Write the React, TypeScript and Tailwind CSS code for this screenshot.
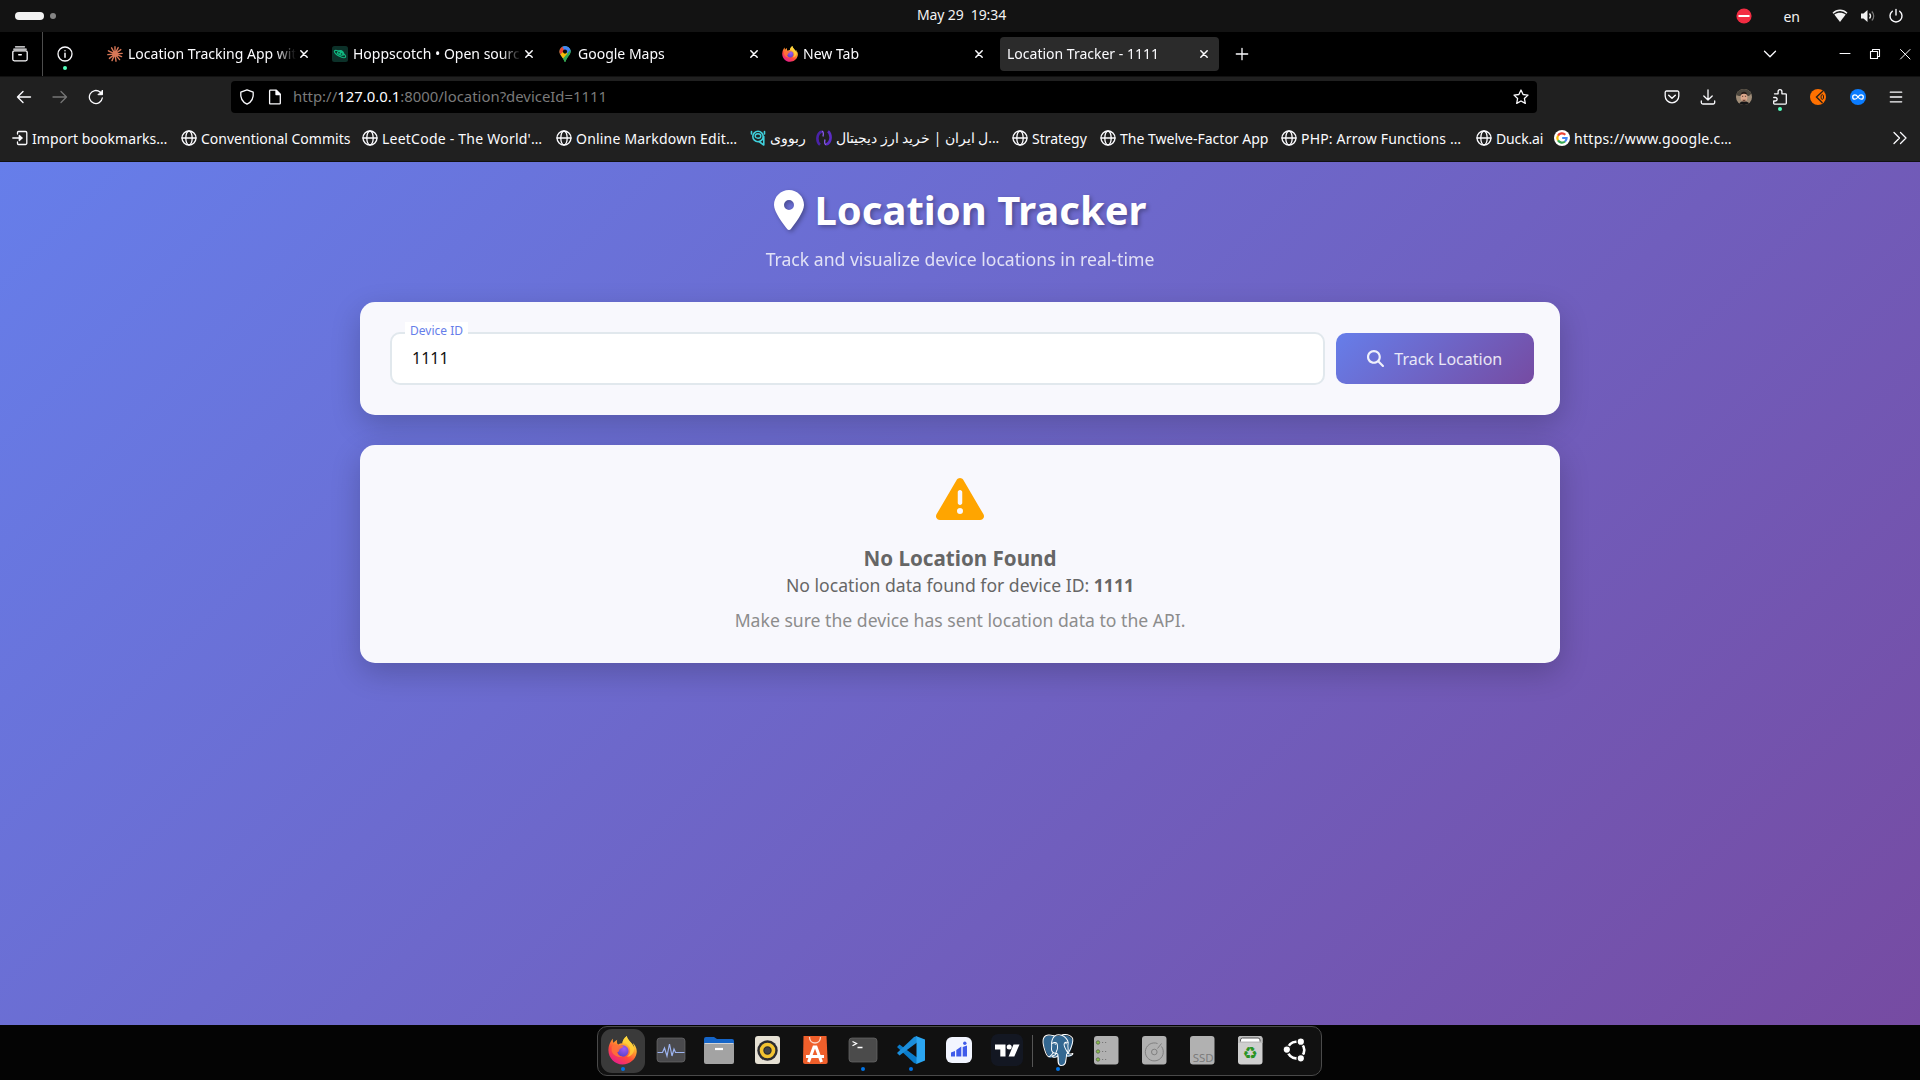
import React from "react";
import { FaLocationDot, FaTriangleExclamation, FaMagnifyingGlass } from "react-icons/fa6";
import { SiPostgresql } from "react-icons/si";

type P = { children?: React.ReactNode; className?: string };

/* 16px line icon */
function Ico({ children, className = "size-4 text-[#fbfbfe]" }: P) {
  return (
    <svg viewBox="0 0 16 16" fill="none" stroke="currentColor" strokeWidth="1.3" strokeLinecap="round" strokeLinejoin="round" className={"shrink-0 " + className}>
      {children}
    </svg>
  );
}

function Globe() {
  return (
    <Ico>
      <circle cx="8" cy="8" r="7" />
      <ellipse cx="8" cy="8" rx="3.2" ry="7" />
      <path d="M1 8h14" />
    </Ico>
  );
}

function Firefox({ className, id }: { className: string; id: string }) {
  return (
    <svg viewBox="0 0 32 32" className={"shrink-0 " + className}>
      <defs>
        <linearGradient id={id + "a"} x1="0.8" y1="0.05" x2="0.25" y2="0.95">
          <stop offset="0" stopColor="#fff44f" />
          <stop offset="0.35" stopColor="#ffa02c" />
          <stop offset="0.65" stopColor="#ff4b3a" />
          <stop offset="1" stopColor="#e81e8c" />
        </linearGradient>
        <radialGradient id={id + "b"} cx="0.6" cy="0.3" r="0.8">
          <stop offset="0" stopColor="#a05cf2" />
          <stop offset="1" stopColor="#4f3fc4" />
        </radialGradient>
      </defs>
      <path
        d="M30.6 12.2c-.7-1.700-2.100-3.500-3.200-4.100.9 1.800 1.400 3.500 1.600 4.900-1.700-4.300-4.700-6-7.100-9.900C21.200 2 20.900 1.200 20.800 0c-3 1.700-4.600 4.900-5 8.100-1.700.1-3.200.5-4.600 1.200C9.700 8 9.500 5.600 10.200 4 8.400 4.800 7 6.200 6 7.400c-.7-.9-.7-3.700-.6-4.300-.8.3-4.500 5.200-4.900 11.500C-.2 23.500 7 31.500 16 31.500c8 0 14.600-5.700 15.600-13 .3-2.100 0-4.300-1-6.300z"
        fill={`url(#${id}a)`}
      />
      <circle cx="16.400" cy="16.600" r="6.300" fill={`url(#${id}b)`} />
      <path d="M4 12c2-3 5-3.500 8-1.500 2 .2 4.500 0 5 .9-.4 1.800-3.600 2.100-4.400 3.600-.6 1.700.1 2.500-2.500 3 .5 3 3.400 5 6.500 4.600-5 2-11-1-12.600-6z" fill="#ff7139" opacity="0.9" />
      <path d="M20.800 0c-3.500 2-4.800 6-5 8.100 5-.3 8.700 3.500 8.700 8 0 3-1.500 5.500-3.500 6.900 5-.5 8-5 8-9.500C28 8 22 6 20.800 0z" fill="#ffd43a" opacity="0.75" />
    </svg>
  );
}

function Claude() {
  return (
    <svg viewBox="0 0 16 16" className="size-4 shrink-0" stroke="#d97757" strokeWidth="1.400" strokeLinecap="round">
      <path d="M8 8V.8M8 8l3.200-6.400M8 8l5.800-4.400M8 8l7.200-.6M8 8l6.600 2.600M8 8l4.600 5.600M8 8l1 7.200M8 8l-3 6.600M8 8l-5.600 4.400M8 8L.8 8.600M8 8L1.400 4.800M8 8L4.600 1.800" />
    </svg>
  );
}

function Hoppscotch() {
  return (
    <svg viewBox="0 0 16 16" className="size-4 shrink-0">
      <rect width="16" height="16" rx="2.500" fill="#0c3129" />
      <ellipse cx="8" cy="8" rx="6.300" ry="2.300" transform="rotate(28 8 8)" fill="none" stroke="#10b981" strokeWidth="1.200" />
      <path d="M4.600 7.200c.5-2.600 3-4 5.200-3 2.200.9 2.800 3.400 1.800 5.600-2.700.2-5.600-.8-7-2.600z" fill="#10b981" />
      <circle cx="7" cy="6.800" r=".8" fill="#0c3129" />
      <circle cx="9.600" cy="8" r=".8" fill="#0c3129" />
    </svg>
  );
}

function MapsPin() {
  return (
    <svg viewBox="0 0 12 16" className="h-4 w-3 shrink-0">
      <clipPath id="pin">
        <path d="M6 0a5.600 5.600 0 0 1 5.600 5.600c0 3.600-3.800 5.400-4.800 9.700-.2.900-1.400.9-1.600 0C4.200 11 .4 9.200.4 5.600A5.600 5.600 0 0 1 6 0z" />
      </clipPath>
      <g clipPath="url(#pin)">
        <rect width="12" height="16" fill="#34a853" />
        <path d="M0 10L12-2v8L4 12z" fill="#4285f4" />
        <path d="M2 0h10v5L6 5.500z" fill="#4285f4" />
        <path d="M0 0h3l3 5.600L0 9z" fill="#ea4335" />
        <path d="M0 9.800L6 4l2.500 4L3.500 13z" fill="#fbbc04" />
        <path d="M8 8l4-5v6l-6 7-2.300-3z" fill="#34a853" />
      </g>
      <circle cx="6" cy="5.600" r="2.100" fill="#0b0b0b" />
    </svg>
  );
}

function Close() {
  return (
    <Ico className="size-4 text-[#fbfbfe]">
      <path d="M4.800 4.800l6.400 6.400M11.200 4.800l-6.400 6.400" strokeWidth="1.500" />
    </Ico>
  );
}

function Tab({ icon, title, active = false }: { icon?: React.ReactNode; title: string; active?: boolean }) {
  return (
    <div className={"mr-1.5 flex h-[34px] w-[219px] items-center rounded-[4px] pr-[7px] pl-[7px] " + (active ? "bg-[#2b2b2b]" : "")}>
      {icon && <div className="mr-[5px] flex w-4 justify-center">{icon}</div>}
      <span className="-mt-0.5 min-w-0 flex-1 overflow-hidden whitespace-nowrap [mask-image:linear-gradient(to_right,black_calc(100%_-_20px),transparent)]">{title}</span>
      <Close />
    </div>
  );
}

function Mark({ icon, children, className }: P & { icon: React.ReactNode }) {
  return (
    <div className={"flex shrink-0 items-center gap-1 whitespace-nowrap " + className}>
      {icon}
      <span>{children}</span>
    </div>
  );
}

function DockItem({ children, active = false, dot = false, className = "w-12" }: P & { active?: boolean; dot?: boolean }) {
  return (
    <div className={"relative flex h-full items-center justify-center " + className}>
      <div className={"flex size-11 items-center justify-center rounded-[11px] pb-0.5 " + (active ? "bg-[#3a3a3a]" : "")}>{children}</div>
      {dot && <span className="absolute bottom-1 left-1/2 size-1 -translate-x-1/2 rounded-full bg-[#0073e5]" />}
    </div>
  );
}

function Svg({ children, className = "size-8" }: P) {
  return (
    <svg viewBox="0 0 32 32" className={"shrink-0 " + className}>
      {children}
    </svg>
  );
}

function SystemBar() {
  return (
    <header className="grid h-8 shrink-0 grid-cols-3 items-center bg-[#131313] text-[#f2f2f2]">
      <div className="flex items-center gap-1.5 pl-[15px]">
        <span className="h-2 w-[29px] rounded-full bg-[#f2f2f2]" />
        <span className="size-1.5 rounded-full bg-[#858585]" />
      </div>
      <div className="-mt-1 pl-[3px] text-center tracking-[-0.1px] whitespace-pre">May 29  19:34</div>
      <div className="flex items-center justify-end pr-4">
        <svg viewBox="0 0 16 16" className="mr-[31px] size-4">
          <circle cx="8" cy="8" r="7.600" fill="#f22c42" />
          <rect x="2.500" y="7" width="11" height="2" fill="#fff" />
        </svg>
        <span className="mr-8">en</span>
        <svg viewBox="0 0 16 16" className="mr-3 size-4" fill="none" stroke="#f2f2f2">
          <path d="M1 5.300C5 1.300 11 1.300 15 5.300" strokeWidth="1.400" />
          <path d="M2.300 6.500C5.500 4 10.500 4 13.700 6.500L8 14z" fill="#f2f2f2" stroke="none" />
        </svg>
        <svg viewBox="0 0 16 16" className="mr-3 size-4" fill="none" stroke="#f2f2f2">
          <path d="M1 5.500h2.500L7.500 2v12l-4-3.500H1z" fill="#f2f2f2" stroke="none" />
          <path d="M9.500 5.500c1.300 1.500 1.300 3.500 0 5" strokeWidth="1.300" />
          <path d="M11.800 3.500c2.600 2.600 2.600 6.400 0 9" strokeWidth="1.200" opacity="0.45" />
        </svg>
        <Ico>
          <path d="M8 1.500V7M4.300 3.300a6 6 0 1 0 7.400 0" strokeWidth="1.400" />
        </Ico>
      </div>
    </header>
  );
}

function TabBar() {
  return (
    <div className="flex h-11 shrink-0 items-center bg-black">
      <div className="flex h-full w-[43px] items-center border-r border-[#4d4d4d] pl-3">
        <Ico>
          <path d="M3.500.8h9M1.800 3.200h12.400" />
          <rect x=".8" y="4.800" width="14.400" height="10" rx="1.500" />
          <path d="M6.800 8.800h2.400" strokeWidth="1.600" />
        </Ico>
      </div>
      <div className="relative mr-[27px] ml-[14px] flex">
        <Ico>
          <circle cx="8" cy="8" r="7" />
          <path d="M8 7.300v4M8 4.700v.1" strokeWidth="1.500" />
        </Ico>
        <span className="absolute top-5 left-1.5 size-1 rounded-full bg-[#54ffbd]" />
      </div>
      <div className="flex">
        <Tab icon={<Claude />} title="Location Tracking App with" />
        <Tab icon={<Hoppscotch />} title="Hoppscotch • Open source API" />
        <Tab icon={<MapsPin />} title="Google Maps" />
        <Tab icon={<Firefox id="t" className="size-4" />} title="New Tab" />
        <Tab title="Location Tracker - 1111" active />
      </div>
      <Ico className="ml-[9px] size-4 text-[#fbfbfe]">
        <path d="M8 2.300v11.400M2.300 8h11.400" />
      </Ico>
      <div className="flex-1" />
      <Ico className="mr-[59px] size-4 text-[#fbfbfe]">
        <path d="M2.500 5.200L8 10.700l5.500-5.500" />
      </Ico>
      <Ico className="mr-[14px] size-4 text-[#fbfbfe]">
        <path d="M3 7.500h10" strokeWidth="1" />
      </Ico>
      <Ico className="mr-[14px] size-4 text-[#fbfbfe]">
        <path d="M3.500 5.500h7v7h-7zM5.500 5.500v-2h7v7h-2" strokeWidth="1.100" />
      </Ico>
      <Ico className="mr-[7px] size-4 text-[#fbfbfe]">
        <path d="M3.500 3.500l9.500 9.500M13 3.500l-9.500 9.500" strokeWidth="1" />
      </Ico>
    </div>
  );
}

function Toolbar() {
  return (
    <div className="flex h-11 shrink-0 items-center border-t border-[#111] bg-[#202020] pb-[3px]">
      <Ico className="ml-4 size-4 text-[#fbfbfe]">
        <path d="M14.500 8H1.500M7 2.500L1.500 8 7 13.500" strokeWidth="1.400" />
      </Ico>
      <Ico className="ml-5 size-4 text-[#757575]">
        <path d="M1 8h13.500M9 2.500L14.500 8 9 13.500" />
      </Ico>
      <Ico className="ml-5 size-4 text-[#fbfbfe]">
        <path d="M14.300 9a6.500 6.500 0 1 1-2.200-5.900L14 4.900" />
        <path d="M14.500 1.500v4.200h-4.200z" fill="currentColor" strokeWidth="1" />
      </Ico>
      <div className="ml-[127px] flex h-8 w-[1306px] items-center rounded-[4px] bg-black pr-2 pl-2">
        <Ico className="size-4 text-[#fbfbfe]">
          <path d="M8 .8l6.200 2.400c.6 5.200-1.400 9.600-6.200 12C3.200 12.800 1.200 8.400 1.800 3.200z" />
        </Ico>
        <Ico className="ml-3 size-4 text-[#fbfbfe]">
          <path d="M3.300 1.200h6l4 4v9a.7.7 0 0 1-.7.700H3.300a.7.7 0 0 1-.7-.7V1.900a.7.7 0 0 1 .7-.7z" />
          <path d="M9 1.500v4h4z" fill="currentColor" />
        </Ico>
        <span className="-mt-px ml-[10px] text-[14.9px] text-[#7a7a7a]">
          http://<span className="text-[#fbfbfe]">127.0.0.1</span>:8000/location?deviceId=1111
        </span>
        <div className="flex-1" />
        <Ico className="size-4 text-[#fbfbfe]">
          <path d="M8 1l2.100 4.500 4.900.6-3.600 3.400.9 4.900L8 12l-4.300 2.400.9-4.900L1 6.100l4.900-.6z" />
        </Ico>
      </div>
      <div className="flex-1" />
      <Ico className="mr-5 size-4 text-[#fbfbfe]">
        <path d="M2.500 2h11a1.300 1.300 0 0 1 1.300 1.300V7A6.800 6.800 0 0 1 1.200 7V3.300A1.300 1.300 0 0 1 2.500 2z" />
        <path d="M4.700 6.200L8 9.200l3.300-3" strokeWidth="1.500" />
      </Ico>
      <Ico className="mr-5 size-4 text-[#fbfbfe]">
        <path d="M8 .8v10M3.800 7L8 11l4.200-4M1.300 12v1.500a1.500 1.500 0 0 0 1.500 1.500h10.400a1.500 1.500 0 0 0 1.500-1.500V12" />
      </Ico>
      <svg viewBox="0 0 16 16" className="mr-5 size-4">
        <clipPath id="av">
          <circle cx="8" cy="8" r="8" />
        </clipPath>
        <g clipPath="url(#av)">
          <rect width="16" height="16" fill="#a08d78" />
          <path d="M0 0h16v4l-3 3H3L0 6z" fill="#4a453c" />
          <path d="M3 16c0-5 10-5 11 0z" fill="#151517" />
          <ellipse cx="8" cy="8" rx="3.400" ry="4.500" fill="#dba68a" />
          <path d="M4.500 6C5 1.500 11 1.500 11.500 6 9 4.200 7 4.200 4.500 6z" fill="#241c18" />
          <path d="M6.300 10.800h3.500l-.8 1.500H7z" fill="#6b4536" />
          <path d="M6 7.300h1.200M8.900 7.300h1.200" stroke="#3a2620" strokeWidth=".8" />
        </g>
      </svg>
      <div className="relative mr-[22px]">
        <Ico>
          <path d="M2.500 4.800h3.600V2.600a1.900 1.900 0 0 1 3.800 0v2.200h3.600a.8.8 0 0 1 .8.800v8.700a.8.800 0 0 1-.8.800H2.500a.8.8 0 0 1-.8-.8V12h1.700a1.700 1.700 0 0 0 0-3.500H1.700" />
        </Ico>
        <span className="absolute top-[18px] left-1.5 size-1 rounded-full bg-[#54ffbd]" />
      </div>
      <svg viewBox="0 0 16 16" className="mr-6 size-4">
        <circle cx="8" cy="8" r="8" fill="#ff7000" />
        <path d="M13 2L6.500 8l6 6" fill="none" stroke="#2a2018" strokeWidth="1.400" />
        <ellipse cx="12.300" cy="8" rx="1.300" ry="2.400" fill="none" stroke="#2a2018" strokeWidth="1" />
      </svg>
      <svg viewBox="0 0 16 16" className="mr-[22px] size-4">
        <circle cx="8" cy="8" r="8" fill="#0a7cff" />
        <path d="M8 8c-1-1.500-2-2.200-3.100-2.200a2.200 2.200 0 0 0 0 4.400C6 10.200 7 9.500 8 8s2-2.200 3.100-2.200a2.200 2.200 0 0 1 0 4.400C10 10.200 9 9.500 8 8z" fill="none" stroke="#fff" strokeWidth="1.300" />
      </svg>
      <Ico className="mr-4 size-4 text-[#fbfbfe]">
        <path d="M2.300 3.200h11.400M2.300 8h11.400M2.300 12.800h11.400" />
      </Ico>
    </div>
  );
}

function Bookmarks() {
  return (
    <div className="flex h-[42px] shrink-0 items-center border-b border-[#111] bg-[#202020] pb-[5px] pl-3 text-[#fbfbfe]">
      <Mark
        className="w-[169px] tracking-[0.06px]"
        icon={
          <Ico>
            <path d="M5.500 4V2.500A1 1 0 0 1 6.500 1.500h7A1.300 1.300 0 0 1 14.800 2.800v10.400a1.300 1.300 0 0 1-1.300 1.300h-7a1 1 0 0 1-1-1V12M.8 8h9" />
            <path d="M7.300 5.400L10 8l-2.700 2.600z" fill="currentColor" />
          </Ico>
        }
      >
        Import bookmarks…
      </Mark>
      <Mark className="w-[181px]" icon={<Globe />}>Conventional Commits</Mark>
      <Mark className="w-[194px] tracking-[0.23px]" icon={<Globe />}>LeetCode - The World'…</Mark>
      <Mark className="w-[194px] tracking-[0.2px]" icon={<Globe />}>Online Markdown Edit…</Mark>
      <Mark
        className="w-[66px] text-[13.5px]"
        icon={
          <Ico className="size-4 text-[#3fd0dc]">
            <path d="M1.500 1.500v2.500M14.500 1.500v2.500" strokeWidth="1.600" />
            <circle cx="8" cy="6.500" r="5.200" strokeWidth="1.600" />
            <ellipse cx="8" cy="6" rx="2.800" ry="2.200" strokeWidth="1.400" />
            <path d="M13.800 6.500V15L9 11.500" strokeWidth="1.600" />
          </Ico>
        }
      >
        ربووی
      </Mark>
      <Mark
        className="w-[196px]"
        icon={
          <svg viewBox="0 0 16 16" className="size-4 shrink-0" fill="none" strokeWidth="2.600">
            <path d="M6 1.500C0 3.500.5 12 4 14.800" stroke="#4a22a8" />
            <path d="M10 14.500C16 12.500 15.500 4 12 1.200" stroke="#5b2cc4" />
            <path d="M6 1.200C8 2.200 7.500 4.500 7 6.500M10 14.800c-2-1-1.500-3.300-1-5.300" stroke="#8d5cf0" strokeWidth="1.300" />
          </svg>
        }
      >
        <span dir="rtl" className="inline-block text-[13.65px]">...ل ایران | خرید ارز دیجیتال</span>
      </Mark>
      <Mark className="w-[88px]" icon={<Globe />}>Strategy</Mark>
      <Mark className="w-[181px]" icon={<Globe />}>The Twelve-Factor App</Mark>
      <Mark className="w-[195px] tracking-[0.18px]" icon={<Globe />}>PHP: Arrow Functions …</Mark>
      <Mark className="w-[78px] tracking-[-0.15px]" icon={<Globe />}>Duck.ai</Mark>
      <Mark
        className="w-[190px] tracking-[0.3px]"
        icon={
          <svg viewBox="0 0 16 16" className="size-4 shrink-0" fill="none" strokeWidth="2.200">
            <circle cx="8" cy="8" r="8" fill="#fff" />
            <path d="M11.300 4.700A4.700 4.700 0 0 0 4 5.600" stroke="#ea4335" />
            <path d="M4 5.600a4.700 4.700 0 0 0 0 4.800" stroke="#fbbc05" />
            <path d="M4 10.400a4.700 4.700 0 0 0 7 1.100" stroke="#34a853" />
            <path d="M11 11.500A4.600 4.600 0 0 0 12.600 8H8.200" stroke="#4285f4" />
          </svg>
        }
      >
        https://www.google.c…
      </Mark>
      <div className="flex-1" />
      <Ico className="mr-3 size-4 text-[#fbfbfe]">
        <path d="M2 2.500L7.500 8 2 13.500M8.500 2.500L14 8l-5.500 5.500" />
      </Ico>
    </div>
  );
}

function Page() {
  return (
    <main className="h-[863px] shrink-0 bg-[linear-gradient(135deg,#667eea_0%,#764ba2_100%)] pt-5 text-[17.6px]">
      <div className="mx-auto w-[1200px]">
        <div className="mb-[31px] flex flex-col items-center text-white">
          <h1 className="mb-2.5 flex h-[55px] items-center gap-[11px] text-[40px] leading-[55px] font-bold [text-shadow:2px_2px_4px_rgba(0,0,0,0.3)]">
            <FaLocationDot className="h-10 w-[30px] drop-shadow-[2px_2px_2px_rgba(0,0,0,0.3)]" />
            Location Tracker
          </h1>
          <p className="h-6 leading-6 opacity-80">Track and visualize device locations in real-time</p>
        </div>
        <section className="flex rounded-[15px] bg-[#f8f8fd] py-[30px] pr-[26.500px] pl-[30px] text-base shadow-[0_10px_30px_rgba(0,0,0,0.2)]">
          <div className="relative h-[53px] w-[935px] rounded-[10px] border-2 border-[#e1e8ed] bg-white px-5 leading-[49px] text-[#111]">
            1111
            <span className="absolute -top-3 left-[13px] h-[17px] bg-white px-[5px] text-xs leading-[17px] text-[#667eea]">Device ID</span>
          </div>
          <button className="mt-px ml-[11px] flex h-[51px] flex-1 items-center justify-center gap-2.5 rounded-[10px] bg-[linear-gradient(135deg,#667eea,#764ba2)] text-white/85">
            <FaMagnifyingGlass className="size-[17px] text-white/90" />
            Track Location
          </button>
        </section>
        <section className="mt-[30px] flex h-[218px] flex-col items-center rounded-[15px] bg-[#f8f8fd] pt-[30px] text-[#666] shadow-[0_10px_30px_rgba(0,0,0,0.2)]">
          <FaTriangleExclamation className="mb-5 size-12 shrink-0 text-[#ffa500]" />
          <h3 className="h-[30px] text-[20.6px] leading-[30px] font-bold">No Location Found</h3>
          <p className="leading-6">
            No location data found for device ID: <b>1111</b>
          </p>
          <p className="mt-[11px] leading-6 text-[#8c8c8c]">Make sure the device has sent location data to the API.</p>
        </section>
      </div>
    </main>
  );
}

function Dock() {
  return (
    <footer className="flex h-[55px] shrink-0 justify-center bg-[#040404] pr-0.5">
      <div className="mt-px flex h-[50px] w-[725px] rounded-[10px] border border-[#4a4a4a] bg-[#111] pl-px">
        <DockItem active dot>
          <Firefox id="d" className="size-[29px]" />
        </DockItem>
        <DockItem>
          <Svg>
            <rect x="2" y="4" width="28" height="24" rx="3" fill="#4a4a4d" stroke="#6a6a6c" strokeWidth=".7" />
            <path d="M2.500 18.500h5l2-4.500 2.500 8 2.500-12 2.500 12 2-7 1.500 3.500h9" fill="none" stroke="#9db4f0" strokeWidth="1.200" />
          </Svg>
        </DockItem>
        <DockItem>
          <Svg>
            <path d="M1 5a2 2 0 0 1 2-2h8l3 2h15a2 2 0 0 1 2 2v6H1z" fill="#1565c8" />
            <rect x="1" y="9" width="30" height="21" rx="2" fill="#a3a3a3" />
            <path d="M1.500 9.500h29" stroke="#d4d4d4" />
            <path d="M12 15h8" stroke="#fff" strokeWidth="2.200" />
          </Svg>
        </DockItem>
        <DockItem>
          <Svg>
            <rect x="4" y="2" width="25" height="28" rx="3" fill="#e6e1d4" />
            <circle cx="16.500" cy="16.500" r="10.200" fill="#2c2c30" />
            <circle cx="16.500" cy="16.500" r="6" fill="#2c2c30" stroke="#f3c431" strokeWidth="3.600" />
            <circle cx="16.500" cy="16.500" r="3" fill="#3f4248" />
          </Svg>
        </DockItem>
        <DockItem>
          <Svg>
            <path d="M4.500 2h23l1.200 26a2 2 0 0 1-2 2H6a2 2 0 0 1-2-2z" fill="#ef5f2b" />
            <path d="M10.500 3c0 8 11 8 11 0" fill="none" stroke="#fbd9cb" strokeWidth="1.300" />
            <path d="M9.500 28l5.500-15h2l5.500 15M7 22.500h18" fill="none" stroke="#fff" strokeWidth="3" />
          </Svg>
        </DockItem>
        <DockItem dot>
          <Svg>
            <rect x="2" y="4" width="28" height="24" rx="3" fill="#4b4b4b" stroke="#6a6a6a" strokeWidth=".7" />
            <path d="M5.500 7.500l4 2-4 2.200M10.500 13.500h5" fill="none" stroke="#fff" strokeWidth="1.300" />
          </Svg>
        </DockItem>
        <DockItem dot>
          <Svg>
            <path d="M22 2v28l-3-1L2 13l2.500-2.500L22 23.500z" fill="#0a7ccb" />
            <path d="M22 8.500L4.500 21.500 2 19 19 3l3-1z" fill="#1b8edb" />
            <path d="M21.500 2.200L30 5.500v21L21.500 30z" fill="#2ba6f2" />
          </Svg>
        </DockItem>
        <DockItem>
          <Svg>
            <rect x="3" y="3" width="26" height="26" rx="6" fill="#f2f5ff" />
            <path d="M8 22.500v-4l4-1.500v5.500zM13.300 22.500v-6.500l5-3.500v10zM19.700 22.500v-9.500l4.300-1.500v11z" fill="#3f5bea" />
            <circle cx="21.800" cy="9.300" r="1.700" fill="#3f5bea" />
          </Svg>
        </DockItem>
        <DockItem>
          <Svg>
            <rect width="32" height="32" rx="7" fill="#131722" />
            <path d="M4 10.500h10.500v12H9.300v-7H4zM22.500 10.500h6L23.300 22.500h-5.700z" fill="#fff" />
            <circle cx="18.200" cy="13" r="2.500" fill="#fff" />
          </Svg>
        </DockItem>
        <span className="mx-px my-2 w-px bg-[#555]" />
        <DockItem dot>
          <svg viewBox="0 0 32 32" className="size-8">
            <path d="M8 1.500c4-1 6 .3 8 .5 3-1.500 7-1 10 0 4 1.500 5.500 4 4.500 8.500-.7 3.500-2 6.500-3.500 9.500 1.800.5 3 .6 3.500 1-1.500 2-4 2-6.500 2-1 4 0 6-2 8-3 1.500-6 0-6-3-.3-2 0-4-.5-5-2 .6-4 1-5 .3-1.500 1-3 1-4-.8C4 18 1 11 1.200 6.500 1.500 3 4.500 1.500 8 1.500z" fill="#336791" />
            <SiPostgresql size={32} color="#ffffff" />
          </svg>
        </DockItem>
        <DockItem>
          <Svg>
            <rect x="4" y="2" width="24.500" height="28.500" rx="3" fill="#b1b1b1" />
            {[8.5, 17.5, 25.5].map((y) => (
              <g key={y}>
                <circle cx="8" cy={y} r="1.700" fill="#8bc34a" stroke="#5d6b50" strokeWidth=".9" />
                <path d={`M12 ${y}h1.200M15 ${y}h1.200`} stroke="#777" />
              </g>
            ))}
          </Svg>
        </DockItem>
        <DockItem>
          <Svg>
            <rect x="4" y="2" width="24.500" height="28.500" rx="3" fill="#b1b1b1" />
            <path d="M23.500 12.500a9 9 0 1 1-4-3" fill="none" stroke="#808080" />
            <path d="M19.500 14.500l4-5" stroke="#808080" />
            <circle cx="16.300" cy="18" r="2.800" fill="none" stroke="#808080" />
          </Svg>
        </DockItem>
        <DockItem>
          <Svg>
            <rect x="4" y="2" width="24.500" height="28.500" rx="3" fill="#b1b1b1" />
            <text x="17.200" y="28" fontSize="11.500" textAnchor="middle" fill="#7c7c7c">SSD</text>
          </Svg>
        </DockItem>
        <DockItem>
          <Svg>
            <rect x="4" y="2" width="24.500" height="28.500" rx="3" fill="#cfcfcf" />
            <path d="M4 9V5a3 3 0 0 1 3-3h18.500a3 3 0 0 1 3 3v4z" fill="#bdbdbd" />
            <path d="M6.500 7.500V6A2 2 0 0 1 8.500 4H24a2 2 0 0 1 2 2v1.500" fill="#fff" stroke="#555" strokeWidth="1" />
            <text x="16.300" y="25" fontSize="17" textAnchor="middle" fill="#2a9324" fontFamily="DejaVu Sans">♻</text>
          </Svg>
        </DockItem>
        <DockItem className="w-[45px]">
          <Svg className="size-7">
            <circle cx="16" cy="16" r="9.500" fill="none" stroke="#fff" strokeWidth="3" />
            <g fill="#fff" stroke="#111" strokeWidth="1.500">
              <circle cx="5.500" cy="15.500" r="4.300" />
              <circle cx="21.500" cy="6.500" r="4.300" />
              <circle cx="21.500" cy="25.500" r="4.300" />
            </g>
          </Svg>
        </DockItem>
      </div>
    </footer>
  );
}

export default function App() {
  return (
    <div className="flex h-[1080px] w-[1920px] flex-col overflow-hidden bg-[#040404] font-['Noto_Sans',sans-serif] text-[14px] text-[#fbfbfe]">
      <SystemBar />
      <TabBar />
      <Toolbar />
      <Bookmarks />
      <Page />
      <Dock />
    </div>
  );
}
